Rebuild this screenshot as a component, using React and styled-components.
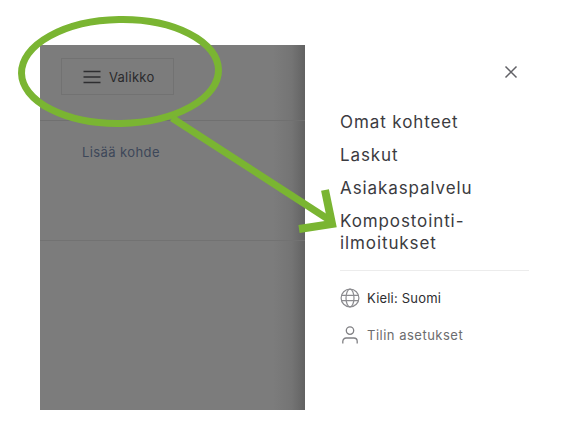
import React from 'react';
import styled, { createGlobalStyle } from 'styled-components';

const GlobalStyle = createGlobalStyle`
    html, body {
        margin: 0;
        background: #fff;
    }
    body {
        font-family: Inter, "Liberation Sans", sans-serif;
    }
`;

const Page = styled.div`
    position: relative;
    width: 581px;
    height: 424px;
    overflow: hidden;
    display: flex;
    padding: 45px 0 14px 40px;
    box-sizing: border-box;
    background: #fff;
`;

const Backdrop = styled.div`
    width: 265px;
    flex-shrink: 0;
    display: flex;
    flex-direction: column;
    background: linear-gradient(to right, #7c7c7c 0, #7c7c7c 88%, #747474 95%, #626262 100%);
`;

const TopBar = styled.div`
    height: 76px;
    box-sizing: border-box;
    padding: 13px 0 0 21px;
    border-bottom: 1px solid #707070;
`;

const MenuButton = styled.div`
    width: 113px;
    height: 37px;
    box-sizing: border-box;
    display: flex;
    align-items: center;
    gap: 8px;
    padding-left: 21px;
    border: 1px solid #727272;
    color: #2a2a2c;
    font-size: 13px;
    letter-spacing: 0.25px;
`;

const AddRow = styled.div`
    height: 120px;
    box-sizing: border-box;
    padding: 23px 0 0 42px;
    border-bottom: 1px solid #727272;
    color: #3d4759;
    font-size: 13px;
    letter-spacing: 0.4px;
`;

const Drawer = styled.nav`
    flex: 1;
    display: flex;
    flex-direction: column;
    padding: 0 52px 0 35px;
`;

const CloseRow = styled.div`
    display: flex;
    justify-content: flex-end;
    padding: 20px 0 0;
    margin-right: 11px;
    margin-bottom: 32px;
`;

const MainLinks = styled.div`
    display: flex;
    flex-direction: column;
    gap: 11px;
    padding-bottom: 16px;
    border-bottom: 1px solid #ececec;
`;

const MainLink = styled.div`
    color: #3b3b3f;
    font-size: 17px;
    font-weight: 400;
    line-height: 22px;
    letter-spacing: 0.9px;
`;

const SubLinks = styled.div`
    display: flex;
    flex-direction: column;
    gap: 15px;
    padding-top: 16px;
`;

const SubLink = styled.div`
    display: flex;
    align-items: center;
    gap: 7px;
    height: 22px;
    font-size: 13px;
    letter-spacing: ${(props) => (props.$muted ? '0.5px' : '0.2px')};
    color: ${(props) => (props.$muted ? '#6c6c6e' : '#2d2d30')};
`;

const Annotation = styled.svg`
    position: absolute;
    left: 0;
    top: 0;
    pointer-events: none;
`;

function MenuIcon() {
    return (
        <svg width="18" height="14" viewBox="0 0 18 14" fill="none" stroke="#2e2e30" strokeWidth="1.4">
            <path d="M0.5 1.5h17M0.5 7h17M0.5 12.5h17" />
        </svg>
    );
}

function CloseIcon() {
    return (
        <svg width="14" height="14" viewBox="0 0 14 14" fill="none" stroke="#616166" strokeWidth="1.5">
            <path d="M1.5 1.5l11 11M12.5 1.5l-11 11" />
        </svg>
    );
}

function GlobeIcon() {
    return (
        <svg width="20" height="20" viewBox="0 0 20 20" fill="none" stroke="#8c8c90" strokeWidth="1.2">
            <circle cx="10" cy="10" r="8.9" />
            <ellipse cx="10" cy="10" rx="4" ry="8.9" />
            <path d="M1.4 7.4h17.2M1.4 12.6h17.2" />
        </svg>
    );
}

function UserIcon() {
    return (
        <svg width="20" height="20" viewBox="0 0 20 20" fill="none" stroke="#808084" strokeWidth="1.3">
            <circle cx="10" cy="5.6" r="3.7" />
            <path d="M2.8 18.6v-2.2a3.4 3.4 0 0 1 3.4-3.4h7.6a3.4 3.4 0 0 1 3.4 3.4v2.2" />
        </svg>
    );
}

export default function App() {
    return (
        <>
            <GlobalStyle />
            <Page>
                <Backdrop>
                    <TopBar>
                        <MenuButton>
                            <MenuIcon />
                            Valikko
                        </MenuButton>
                    </TopBar>
                    <AddRow>Lisää kohde</AddRow>
                </Backdrop>
                <Drawer>
                    <CloseRow>
                        <CloseIcon />
                    </CloseRow>
                    <MainLinks>
                        <MainLink>Omat kohteet</MainLink>
                        <MainLink>Laskut</MainLink>
                        <MainLink>Asiakaspalvelu</MainLink>
                        <MainLink>
                            Kompostointi-
                            <br />
                            ilmoitukset
                        </MainLink>
                    </MainLinks>
                    <SubLinks>
                        <SubLink>
                            <GlobeIcon />
                            Kieli: Suomi
                        </SubLink>
                        <SubLink $muted>
                            <UserIcon />
                            Tilin asetukset
                        </SubLink>
                    </SubLinks>
                </Drawer>
                <Annotation width="581" height="424" viewBox="0 0 581 424" fill="none" stroke="#7ab532">
                    <ellipse cx="120" cy="71.5" rx="98.5" ry="52" strokeWidth="7" transform="rotate(-1 120 71.5)" />
                    <path d="M172 118L331 221" strokeWidth="7" />
                    <path d="M325 190L332 224L299 229" strokeWidth="8" />
                </Annotation>
            </Page>
        </>
    );
}
